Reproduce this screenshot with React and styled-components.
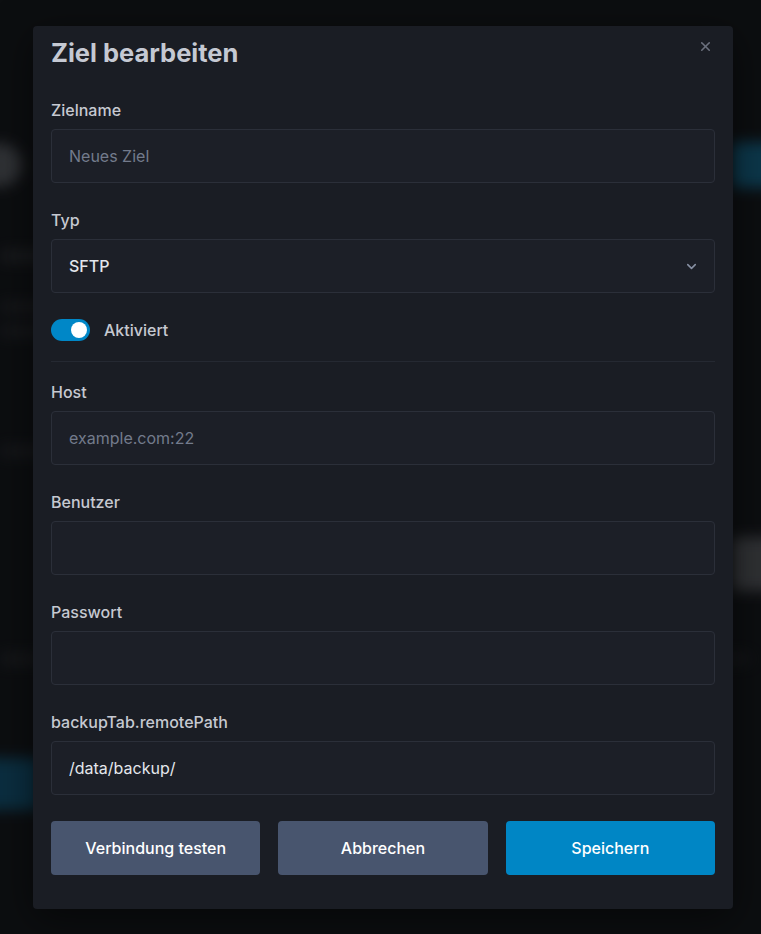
import React, { useState } from 'react';
import styled, { createGlobalStyle } from 'styled-components';
import { X, ChevronDown } from 'lucide-react';

const Global = createGlobalStyle`
  html, body { margin: 0; padding: 0; background: #0f1012; }
  body { font-family: Inter, "Noto Sans", sans-serif; -webkit-font-smoothing: antialiased; }
  * { box-sizing: border-box; }
`;

const Screen = styled.div`
  position: relative;
  width: 761px;
  height: 934px;
  overflow: hidden;
  background: #0f1012;
`;

/* the page behind the dialog, blurred */
const Page = styled.div`
  display: flex;
  flex-direction: column;
  padding-top: 140px;
  filter: blur(7px);
  opacity: 0.9;
`;

const PageRow = styled.div`
  display: flex;
  justify-content: space-between;
  align-items: center;
  height: ${(p) => p.h || 20}px;
  margin-top: ${(p) => p.mt || 0}px;
`;

const Blob = styled.div`
  width: ${(p) => p.w}px;
  height: ${(p) => p.h}px;
  border-radius: ${(p) => p.r || 6}px;
  background: ${(p) => p.bg};
  margin-left: ${(p) => p.ml || 0}px;
  margin-right: ${(p) => p.mr || 0}px;
`;

const Overlay = styled.div`
  position: absolute;
  inset: 0;
  background: rgba(10, 11, 13, 0.35);
  padding: 26px 28px 0 33px;
`;

const Modal = styled.div`
  width: 700px;
  background: #1a1d24;
  border-radius: 4px;
  padding-bottom: 34px;
  box-shadow: 0 10px 40px rgba(0, 0, 0, 0.5);
`;

const Header = styled.div`
  display: flex;
  justify-content: space-between;
  align-items: flex-start;
  height: 54px;
  padding: 12px 20px 0 18px;
`;

const Title = styled.h2`
  margin: 0;
  font-size: 25.5px;
  line-height: 30px;
  font-weight: 700;
  color: #c5c9d3;
`;

const Close = styled.button`
  background: none;
  border: 0;
  padding: 0;
  margin-top: 1px;
  color: #6b707d;
  display: flex;
  cursor: pointer;
`;

const Body = styled.div`
  padding: 18px 18px 0 18px;
  display: flex;
  flex-direction: column;
`;

const Field = styled.div`
  display: flex;
  flex-direction: column;
  margin-bottom: 25px;
`;

const Label = styled.label`
  font-size: 16px;
  line-height: 24px;
  font-weight: 500;
  color: #c6c9d1;
  margin-bottom: 7px;
`;

const Input = styled.input`
  height: 54px;
  width: 100%;
  background: #1c1f27;
  border: 1px solid #2b2f39;
  border-radius: 4px;
  padding: 0 17px;
  font-family: inherit;
  font-size: 16px;
  color: #e4e7ed;
  outline: none;
  &::placeholder { color: #737b8c; }
`;

const SelectBox = styled.div`
  height: 54px;
  display: flex;
  align-items: center;
  justify-content: space-between;
  background: #1c1f27;
  border: 1px solid #2b2f39;
  border-radius: 4px;
  padding: 0 15px 0 17px;
  font-size: 16px;
  font-weight: 500;
  color: #e4e7ed;
  svg { color: #8790a3; }
`;

const ToggleRow = styled.div`
  display: flex;
  align-items: center;
  gap: 14px;
  margin-top: 1px;
  padding-bottom: 20px;
  border-bottom: 1px solid #252932;
  margin-bottom: 18px;
`;

const Track = styled.span`
  width: 39px;
  height: 22px;
  border-radius: 11px;
  background: ${(p) => (p.on ? '#0087c7' : '#3a4150')};
  display: flex;
  align-items: center;
  justify-content: ${(p) => (p.on ? 'flex-end' : 'flex-start')};
  padding: 0 3px;
  cursor: pointer;
`;

const Knob = styled.span`
  width: 16px;
  height: 16px;
  border-radius: 50%;
  background: #ffffff;
`;

const ToggleText = styled.span`
  font-size: 16px;
  font-weight: 500;
  color: #c6c9d1;
`;

const Buttons = styled.div`
  display: grid;
  grid-template-columns: repeat(3, 1fr);
  gap: 18px;
  margin-top: 1px;
`;

const Button = styled.button`
  height: 54px;
  border: 0;
  border-radius: 4px;
  background: ${(p) => (p.primary ? '#0086c5' : '#48556e')};
  color: #ffffff;
  font-family: inherit;
  font-size: 16px;
  font-weight: 500;
  cursor: pointer;
`;

const fields = [
  { label: 'Host', placeholder: 'example.com:22', value: '' },
  { label: 'Benutzer', placeholder: '', value: '' },
  { label: 'Passwort', placeholder: '', value: '', type: 'password' },
  { label: 'backupTab.remotePath', placeholder: '', value: '/data/backup/' },
];

export default function App() {
  const [on, setOn] = useState(true);
  return (
    <Screen>
      <Global />
      <Page>
        <PageRow h={50}>
          <Blob w={44} h={44} r={22} bg="#4a4c50" ml={-22} />
          <Blob w={60} h={46} bg="#0e5675" mr={-30} />
        </PageRow>
        <PageRow h={12} mt={60}>
          <Blob w={60} h={10} bg="#2a2b2e" />
        </PageRow>
        <PageRow h={10} mt={40}>
          <Blob w={50} h={8} bg="#252629" />
        </PageRow>
        <PageRow h={10} mt={14}>
          <Blob w={50} h={8} bg="#25262a" />
        </PageRow>
        <PageRow h={10} mt={110}>
          <Blob w={50} h={8} bg="#25262a" />
        </PageRow>
        <PageRow h={56} mt={80}>
          <span />
          <Blob w={60} h={54} bg="#4a4b4e" mr={-30} />
        </PageRow>
        <PageRow h={14} mt={60}>
          <Blob w={40} h={10} bg="#222326" />
          <Blob w={30} h={10} bg="#1d1e21" mr={10} />
        </PageRow>
        <PageRow h={56} mt={90}>
          <Blob w={60} h={52} bg="#0d4763" ml={-20} />
        </PageRow>
      </Page>
      <Overlay>
        <Modal>
          <Header>
            <Title>Ziel bearbeiten</Title>
            <Close aria-label="close">
              <X size={15} strokeWidth={2.5} />
            </Close>
          </Header>
          <Body>
            <Field>
              <Label>Zielname</Label>
              <Input placeholder="Neues Ziel" />
            </Field>
            <Field>
              <Label>Typ</Label>
              <SelectBox>
                SFTP
                <ChevronDown size={15} strokeWidth={2.5} />
              </SelectBox>
            </Field>
            <ToggleRow>
              <Track on={on ? 1 : 0} onClick={() => setOn(!on)}>
                <Knob />
              </Track>
              <ToggleText>Aktiviert</ToggleText>
            </ToggleRow>
            {fields.map((f) => (
              <Field key={f.label}>
                <Label>{f.label}</Label>
                <Input type={f.type || 'text'} placeholder={f.placeholder} defaultValue={f.value} />
              </Field>
            ))}
            <Buttons>
              <Button>Verbindung testen</Button>
              <Button>Abbrechen</Button>
              <Button primary>Speichern</Button>
            </Buttons>
          </Body>
        </Modal>
      </Overlay>
    </Screen>
  );
}
